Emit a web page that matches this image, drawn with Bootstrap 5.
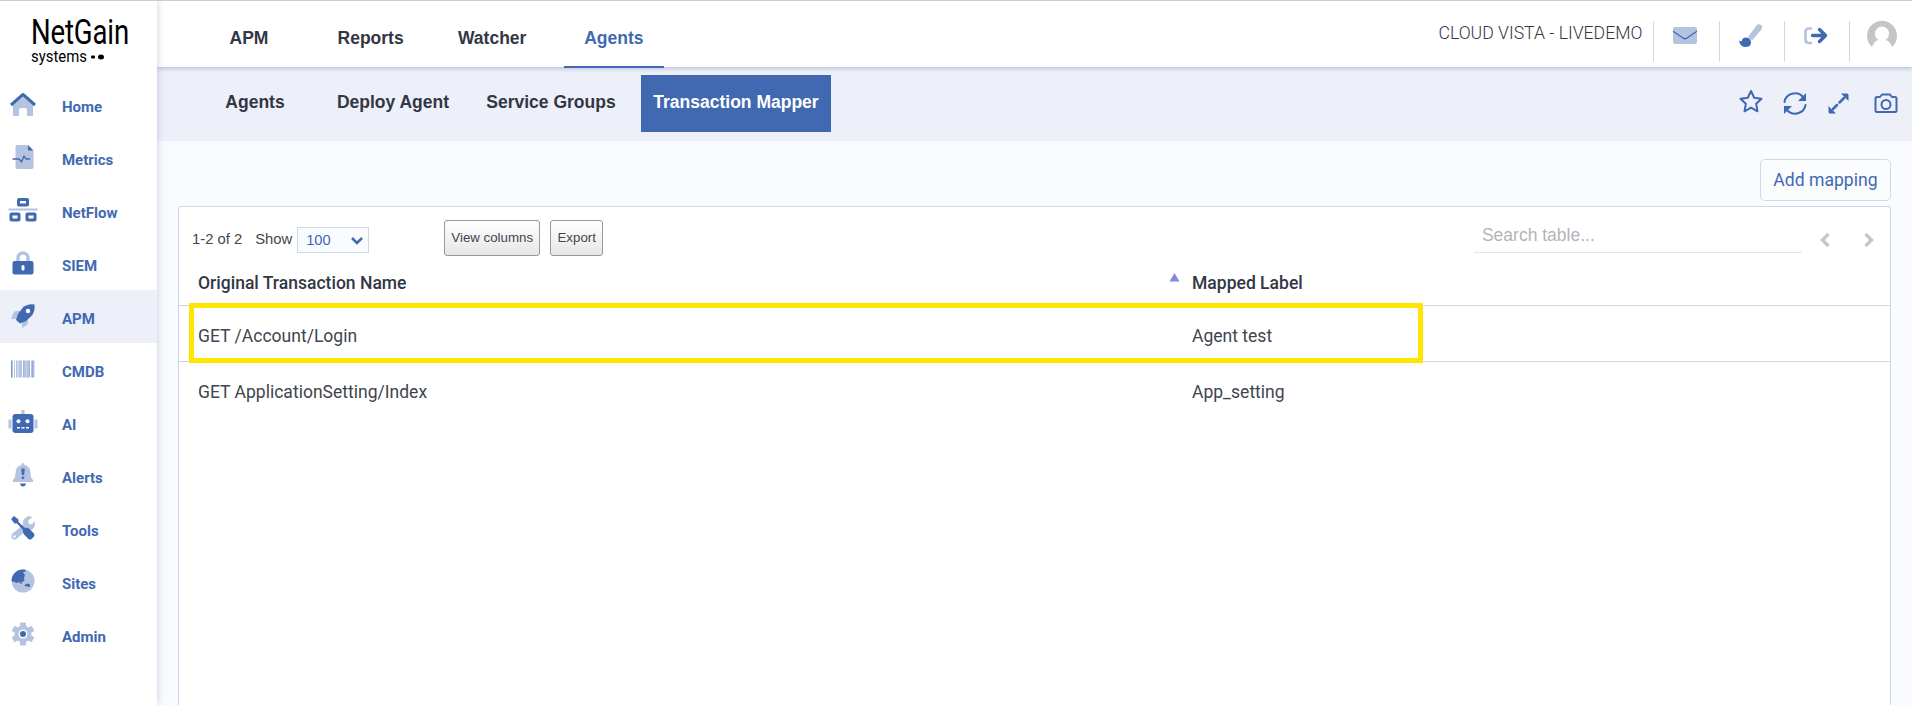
<!DOCTYPE html>
<html lang="en">
<head>
<meta charset="utf-8">
<meta name="viewport" content="width=device-width, initial-scale=1">
<title>Transaction Mapper</title>
<link href="https://cdn.jsdelivr.net/npm/bootstrap@5.3.0/dist/css/bootstrap.min.css" rel="stylesheet">
<style>
:root{--ink:#333745;--blue:#4169b2;--pale:#b3c3e0;--line:#cdd8e8}
body{font-family:Roboto,sans-serif;font-size:17.6px;color:var(--ink);background:#fff;border-top:1px solid #ccc;height:705px;overflow:hidden;line-height:1.2}
.sidebar{width:157px;background:#fff;box-shadow:0 0 8px rgba(65,85,140,.28);z-index:3}
.brand-box{height:77px;padding:14px 0 0 31px;color:#000;line-height:1}
.brand-name{font-size:34.5px;height:34px;line-height:34px;transform:scaleX(.8);transform-origin:0 0;letter-spacing:-.2px;white-space:nowrap}
.brand-sub{font-size:16px;line-height:16px;width:56px;transform:scaleX(.93);transform-origin:0 0;white-space:nowrap}
.side-item{height:53px;font-size:15px;font-weight:700;color:var(--blue);text-decoration:none;padding-left:8.4px}
.side-item span{padding:4px 0 0 23.6px}
.side-item svg{width:30px;height:24px;margin-bottom:2px}
.side-item.active{background:#edf0f9}
svg{display:block;flex:none;overflow:visible}
.d{fill:#4169b2}.l{fill:#b3c3e0}
.o{fill:none;stroke:#4169b2;stroke-width:2;stroke-linejoin:round;stroke-linecap:round}
.topbar{height:66px;background:#fff;box-shadow:0 1px 5px rgba(80,110,150,.45);z-index:2}
.tab-font{font-family:"Liberation Sans",sans-serif;font-weight:700;font-size:17.5px;color:var(--ink);text-decoration:none;white-space:nowrap}
.top-tabs{padding-left:42px}
.top-tab{width:100px;margin-right:21.6px;height:67px;line-height:75px;text-align:center}
.top-tab.active{color:var(--blue);border-bottom:2px solid var(--blue)}
.user-name{font-weight:300;font-size:17.65px;padding:22px 11px 0 0;white-space:nowrap}
.tool-cell{width:65.2px;height:41px;margin-top:20px;border-left:1px solid var(--line);padding-left:19px}
.subbar{height:74px;background:#edf0f9}
.sub-tab{height:57px;line-height:55px;margin-top:8px;text-align:center}
.sub-tab.active{background:var(--blue);color:#fff}
.main-area{background:#fafbfe}
.btn-map{width:131px;height:42px;border:1px solid var(--line);border-radius:5px;color:var(--blue);font-size:17.6px;padding:0;background:#fafcfe}
.panel{margin:5px 21px 0 21px;background:#fff;border:1px solid var(--line);border-bottom:0;border-radius:3px 3px 0 0}
.tools-row{height:53px;font-family:"Liberation Sans",sans-serif}
.count-text{font-size:14.8px;white-space:nowrap;padding:24px 0 0 13px;color:#44464e}
.show-select{width:72px;height:26px;margin:20px 0 0 5px;border:1px solid var(--line);background:#fafbfe;color:var(--blue);font-size:14.7px;padding:1px 5px 0 8px}
.btn-old{height:36px;margin-top:13px;border:1px solid #999;border-radius:3px;background:linear-gradient(#fff,#e6e6e6);color:#44464e;font-size:13.3px;padding:0;line-height:1;white-space:nowrap}
.search-box{width:328px;height:32px;margin-top:14px;border:0;border-bottom:1px solid #e2e5ee;border-radius:0;padding:0 8px 3px;font-size:17.5px;color:#333}
.search-box::placeholder{color:#b2b4ba;opacity:1}
.map-table{table-layout:fixed}
.map-table td,.map-table th{padding:0 0 0 19px;height:56px;border-bottom:1px solid var(--line);vertical-align:middle}
.map-table th{height:45px;font-weight:500;font-size:17.55px;padding-top:2px}
.map-table td{padding-top:7px;font-size:17.55px;color:#41444f}
.map-table tr:last-child td{border:0;padding-top:6px}
.mark-frame{position:absolute;left:10px;top:43px;width:1234px;height:60px;border:5px solid #ffe600}
</style>
</head>
<body>
<div class="d-flex h-100">
  <nav class="sidebar flex-shrink-0 position-relative">
    <div class="brand-box">
      <div class="brand-name">NetGain</div>
      <div class="d-flex"><div class="brand-sub">systems</div><svg width="17" height="16"><rect x="4" y="6.500" width="4" height="3" rx="1"/><ellipse cx="14" cy="8" rx="3" ry="2.500"/></svg></div>
    </div>
    <a class="side-item d-flex align-items-center"><svg viewBox="-15 -12 30 24"><path class="l" d="M-10 1L0-7 10 1V12H4V6Q4 4 2 4H-2Q-4 4-4 6V12H-10Z"/><path class="o" style="stroke-width:3;stroke-linecap:butt" d="M-12 1L0-9.500 12 1"/></svg><span>Home</span></a>
    <a class="side-item d-flex align-items-center"><svg viewBox="-15 -12 30 24"><path class="l" d="M-6-12H4.500L10.500-6V10Q10.500 12 9 12H-6Q-7.500 12-7.500 10V-10Q-7.500-12-6-12Z"/><path class="d" d="M5-12L10.500-6.500H5Z"/><path class="o" style="stroke-width:1.300" d="M-10 2H-4L-1.500 5 1-1 3 2H6.500"/></svg><span>Metrics</span></a>
    <a class="side-item d-flex align-items-center"><svg viewBox="-15 -12 30 24"><path class="l" d="M-14.500-1.500H14.500V.5H-14.500Z"/><g class="o" style="stroke-width:3"><rect x="-4.500" y="-10.500" width="9" height="5.500" rx=".5"/><rect x="-12" y="4" width="8" height="6" rx=".5"/><rect x="4" y="4" width="8" height="6" rx=".5"/></g></svg><span>NetFlow</span></a>
    <a class="side-item d-flex align-items-center"><svg viewBox="-15 -12 30 24"><path d="M-5-1V-5A5 5 0 0 1 5-5V-1" fill="none" stroke="#b3c3e0" stroke-width="3.500"/><rect class="d" x="-10.500" y="-2" width="21" height="13.500" rx="2"/><rect x="-1.500" y="2" width="3" height="5.500" rx="1.500" fill="#fff"/></svg><span>SIEM</span></a>
    <a class="side-item active d-flex align-items-center"><svg viewBox="-15 -12 30 24"><path class="l" d="M-2-5H-7Q-8.500-5-9.500-3L-12 3H-5ZM5 2V7Q5 9-1 12V5Z"/><path class="d" d="M11.500-11.500Q4-12.500-.5-8L-5-2-7 4-3 7.500 3 5 8 .5Q12.500-4 11.500-11.500Z"/><circle cx="5" cy="-5" r="2.200" fill="#fff"/></svg><span>APM</span></a>
    <a class="side-item d-flex align-items-center"><svg viewBox="-15 -12 30 24"><path class="l" d="M-12-8.500h2V8.500h-2zM-7-8.500h1V8.500h-1zM-4-8.500h3V8.500h-3zM1-8.500h2V8.500h-2zM4-8.500h2V8.500h-2zM8-8.500h3.500V8.500H8z"/><path class="d" opacity=".5" d="M-12-8.500h1V8.500h-1zM-9-8.500h.7V8.500h-.7zM-5.500-8.500h1V8.500h-1zM0-8.500h1V8.500h-1zM3-8.500h.6V8.500h-.6zM6-8.500h1V8.500h-1zM9.500-8.500h.6V8.500h-.6z"/></svg><span>CMDB</span></a>
    <a class="side-item d-flex align-items-center"><svg viewBox="-15 -12 30 24"><path class="l" d="M-1.500-12h3v5h-3zM-14.500-1.500q0-1 1-1h2V6.500h-2q-1 0-1-1zM14.500-1.500q0-1-1-1h-2V6.500h2q1 0 1-1z"/><rect class="d" x="-10.500" y="-8" width="21" height="19" rx="3"/><g fill="#fff"><circle cx="-4.500" cy="-.7" r="2"/><circle cx="4.500" cy="-.7" r="2"/><path d="M-6 5h3v1.500h-3zM-1.500 5h3v1.500h-3zM3 5h3v1.500H3z"/></g></svg><span>AI</span></a>
    <a class="side-item d-flex align-items-center"><svg viewBox="-15 -12 30 24"><path class="l" d="M0-12Q1.500-12 1.500-10 7.500-8.500 7.500-2 7.500 3 10 5 11 7 9 7H-9Q-11 7-10 5-7.500 3-7.500-2-7.500-8.500-1.500-10-1.500-12 0-12Z"/><path class="d" d="M-1.700-6.500h3.400L1.200 0h-2.400ZM-3 8.500H3Q2.500 11.500 0 11.500T-3 8.500Z"/><circle class="d" cx="0" cy="2.800" r="1.400"/></svg><span>Alerts</span></a>
    <a class="side-item d-flex align-items-center"><svg viewBox="-15 -12 30 24"><path class="l" d="M-11 6L0-3Q-1-8 3-10.500 6-12.500 9-11L5-7 6-4 9-3.500 11.500-7Q13-1 9 1.500 6 3 3.500 2L-6.500 11Q-9 12.500-11 10.500-12.500 8-11 6Z"/><circle cx="-8.500" cy="8.500" r="1.200" fill="#fff"/><path class="d" d="M-9-12L-4.500-8.500V-6L2 0Q4.500-1 6.500 1L11 5.500Q12 7 11 8.500L8.500 11Q7 12 5.500 11L1 6.500Q-1 4.500 0 2L-6-4.500H-8.500L-12-9Z"/></svg><span>Tools</span></a>
    <a class="side-item d-flex align-items-center"><svg viewBox="-15 -12 30 24"><circle class="l" r="11.500"/><path class="d" d="M-11.500 0A11.500 11.500 0 0 1 2.500-11.300L3-10 0-8.500 2-6 1-3 1.500-1 0 1-2 .5-1 3H-2L-4 1-6 2ZM1 4.500L4 2.500 7 3.500V6L4 5.500Z"/></svg><span>Sites</span></a>
    <a class="side-item d-flex align-items-center"><svg viewBox="-15 -12 30 24"><g class="l"><circle r="8.500"/><rect x="-3" y="-11.500" width="6" height="23" rx="1"/><rect x="-3" y="-11.500" width="6" height="23" rx="1" transform="rotate(60)"/><rect x="-3" y="-11.500" width="6" height="23" rx="1" transform="rotate(120)"/></g><circle r="4.500" fill="#fff"/><circle class="d" r="3"/></svg><span>Admin</span></a>
  </nav>
  <div class="flex-grow-1 d-flex flex-column">
    <header class="topbar d-flex position-relative flex-shrink-0">
      <nav class="top-tabs d-flex">
        <a class="tab-font top-tab">APM</a><a class="tab-font top-tab">Reports</a><a class="tab-font top-tab">Watcher</a><a class="tab-font top-tab active">Agents</a>
      </nav>
      <div class="d-flex ms-auto">
        <div class="user-name">CLOUD VISTA - LIVEDEMO</div>
        <div class="tool-cell"><svg width="24" height="30" viewBox="0 0 24 30"><rect class="l" y="6" width="24" height="17" rx="2"/><path class="o" style="stroke-width:1.300" d="M.5 10.500L10 17Q12 18.500 14 17L23.500 10.500"/></svg></div>
        <div class="tool-cell"><svg width="24" height="30" viewBox="0 0 24 30"><path class="l" d="M9 16L17.500 4.500Q20 2 22.500 4.500 24 6.500 22 9L13 19.500Z"/><path class="d" d="M0 19.500Q2 21 3 19.500 3.500 16.500 7 16.500 12 17 12 21.500 12 26 6 26 1 26 0 19.500Z"/></svg></div>
        <div class="tool-cell"><svg width="24" height="30" viewBox="0 0 24 30"><path d="M8 7.500H5Q1.500 7.500 1.500 11V18.500Q1.500 22 5 22H8" fill="none" stroke="#b3c3e0" stroke-width="2.700"/><path class="o" style="stroke-width:3.400" d="M8.500 14.500H21M15.500 8.500L21.500 14.500 15.500 20.500"/></svg></div>
        <div class="tool-cell" style="padding-left:17px;width:63px"><svg width="30" height="30" viewBox="0 0 30 30"><path fill="#c5c5c5" d="M5 26A15 15 0 1 1 25 26Q23 20 18.500 19 22 16.500 22 12.500A7 7 0 0 0 8 12.500Q8 16.500 11.500 19 7 20 5 26Z"/></svg></div>
      </div>
    </header>
    <div class="subbar d-flex flex-shrink-0">
      <a class="tab-font sub-tab" style="width:84px;margin-left:56px">Agents</a><a class="tab-font sub-tab" style="width:138px;margin-left:27px">Deploy Agent</a><a class="tab-font sub-tab" style="width:154px;margin-left:12px">Service Groups</a><a class="tab-font sub-tab active" style="width:190px;margin-left:13px">Transaction Mapper</a>
      <div class="d-flex ms-auto" style="padding:22px 13.500px 0 0">
        <svg width="24" height="25" viewBox="0 0 24 25"><path class="o" d="M12 2L15.200 8.700 22.500 9.700 17.200 14.800 18.500 22.300 12 18.700 5.500 22.300 6.800 14.800 1.500 9.700 8.800 8.700Z"/></svg>
        <svg style="margin-left:20px" width="24" height="25" viewBox="0 0 24 25"><path class="o" d="M1.500 13A10.500 10 0 0 1 20 8M22.500 16A10.500 10 0 0 1 4 21"/><path class="d" d="M23 4V12H15ZM1 25V17H9Z"/></svg>
        <svg style="margin-left:21px" width="21" height="25" viewBox="0 0 21 25"><path class="o" style="stroke-width:2.500" d="M16 9L11.500 13.500M9 16L5 20"/><path class="d" d="M13 4.500H19Q20.500 4.500 20.500 6V12ZM.5 17L8 24.500H2Q.5 24.500 .5 23Z"/></svg>
        <svg style="margin-left:25px" width="24" height="25" viewBox="0 0 24 25"><path class="o" d="M3 8H6L8 5.500H16L18 8H21Q22.500 8 22.500 9.500V21.500Q22.500 23 21 23H3Q1.500 23 1.500 21.500V9.500Q1.500 8 3 8Z"/><circle class="o" cx="12" cy="15.500" r="4.500"/></svg>
      </div>
    </div>
    <main class="main-area flex-grow-1 d-flex flex-column">
      <div class="d-flex justify-content-end" style="padding:18px 21px 0 0"><button class="btn btn-map">Add mapping</button></div>
      <section class="panel flex-grow-1">
        <div class="tools-row d-flex">
          <div class="count-text">1-2 of 2</div>
          <div class="count-text">Show</div>
          <div class="show-select d-flex align-items-center justify-content-between"><span>100</span><svg width="12" height="8"><path class="o" style="stroke-width:2.500;stroke-linecap:butt;stroke-linejoin:miter" d="M1 1L6 6 11 1"/></svg></div>
          <button class="btn-old" style="margin-left:75px;width:96px">View columns</button>
          <button class="btn-old" style="margin-left:10px;width:53px">Export</button>
          <input class="search-box ms-auto" placeholder="Search table...">
          <svg style="margin:26px 0 0 18px" width="10" height="14"><path fill="none" stroke="#c5c5c5" stroke-width="3.300" d="M8.500 1L2.500 7 8.500 13"/></svg>
          <svg style="margin:26px 16px 0 34px" width="10" height="14"><path fill="none" stroke="#c5c5c5" stroke-width="3.300" d="M1.500 1L7.500 7 1.500 13"/></svg>
        </div>
        <div class="position-relative">
        <table class="map-table w-100">
          <colgroup><col style="width:995px"><col></colgroup>
          <tr><th><div class="d-flex justify-content-between">Original Transaction Name<svg style="margin:0 -6px 0 0" width="11" height="9"><path fill="#8488df" d="M5.500 0L10.500 8.500H.5Z"/></svg></div></th><th style="padding-left:18px">Mapped Label</th></tr>
          <tr><td>GET /Account/Login</td><td style="padding-left:18px">Agent test</td></tr>
          <tr><td>GET ApplicationSetting/Index</td><td style="padding-left:18px">App_setting</td></tr>
        </table>
        <div class="mark-frame"></div>
        </div>
      </section>
    </main>
  </div>
</div>
<script src="https://cdn.jsdelivr.net/npm/bootstrap@5.3.0/dist/js/bootstrap.bundle.min.js"></script>
</body>
</html>
